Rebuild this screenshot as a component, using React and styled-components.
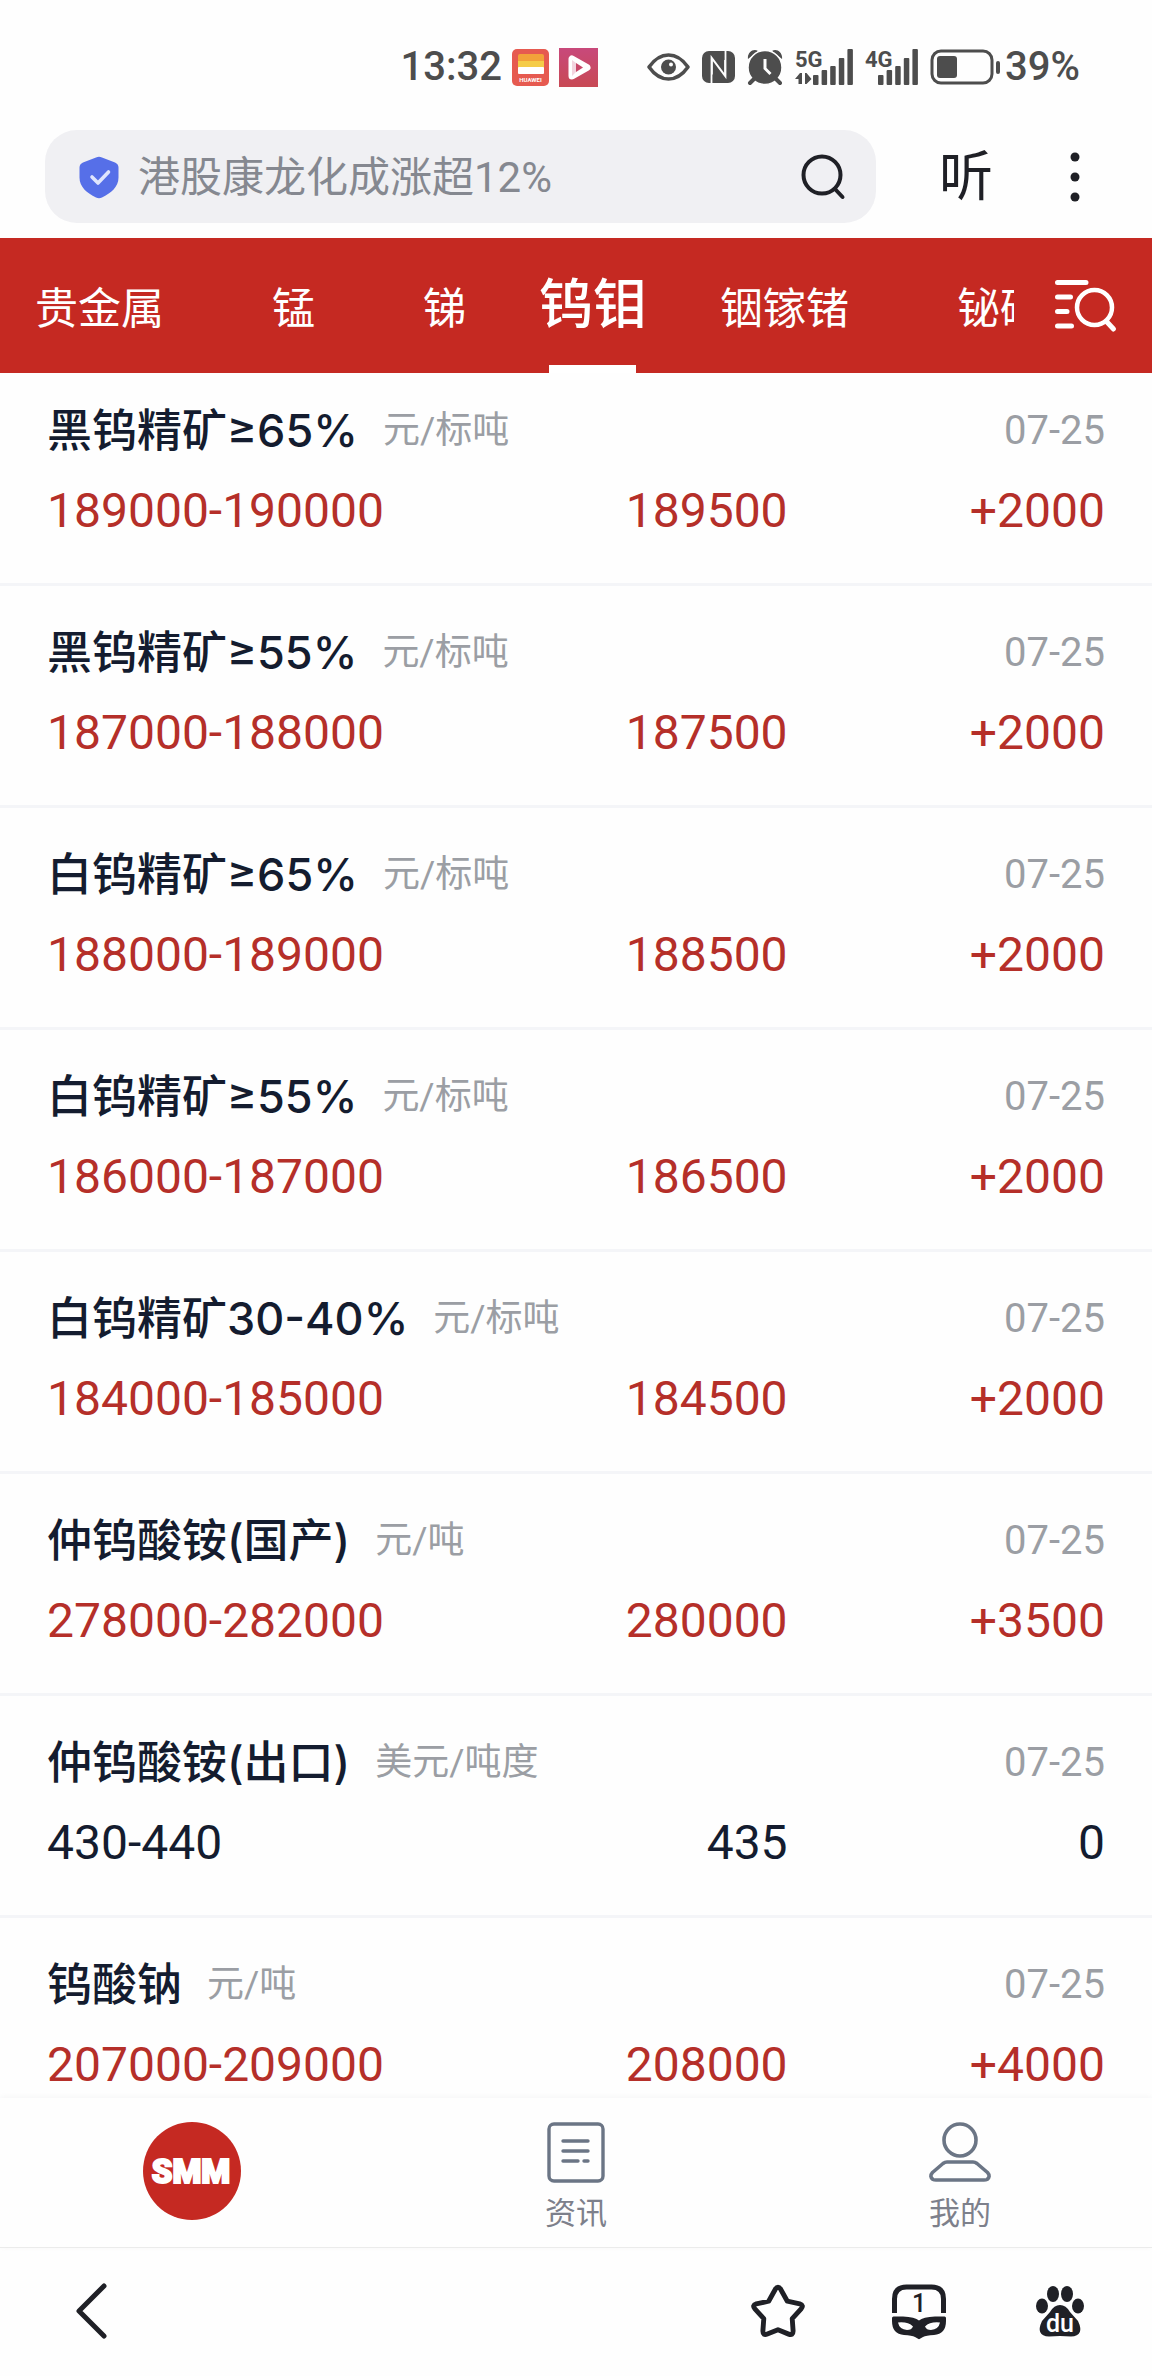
import React, { useState } from "react";
import styled, { createGlobalStyle } from "styled-components";

const GlobalStyle = createGlobalStyle`
  * {
    box-sizing: border-box;
  }
  body {
    margin: 0;
    background-color: #fefefe;
    font-family: Roboto, "Noto Sans CJK SC", sans-serif;
  }
  button {
    margin: 0;
    padding: 0;
    border: none;
    background: none;
    font-family: inherit;
    color: inherit;
    cursor: pointer;
  }
  svg {
    display: block;
    flex: none;
    overflow: visible;
  }
`;

const Screen = styled.div`
  display: flex;
  flex-direction: column;
  height: 100vh;
  overflow: hidden;
`;

const StatusBar = styled.div`
  display: flex;
  align-items: center;
  justify-content: flex-end;
  flex: none;
  height: 130px;
  padding: 4px 72px 0 0;
  color: #4d4d4d;
  font-size: 40px;
  font-weight: 500;
  line-height: 50px;
`;

const StatusGroup = styled.div`
  display: flex;
  align-items: center;
  gap: ${(props) => props.$gap}px;
  margin-right: ${(props) => props.$after || 0}px;
`;

const SignalLabel = styled.text`
  font-family: "Liberation Sans Narrow", Roboto, sans-serif;
  font-size: 22px;
  font-weight: 700;
`;

const SearchRow = styled.header`
  display: flex;
  align-items: center;
  flex: none;
  height: 108px;
  padding: 0 67px 15px 45px;
  color: #1f2026;
`;

const SearchBox = styled.form`
  display: flex;
  align-items: center;
  flex: 1;
  min-width: 0;
  height: 93px;
  padding: 0 30px 0 34px;
  border-radius: 32px;
  background-color: #f0f0f3;
`;

const SearchInput = styled.input`
  flex: 1;
  min-width: 0;
  height: 60px;
  margin-left: 19px;
  padding: 2px 0 0;
  border: none;
  outline: none;
  background: none;
  font-family: inherit;
  font-size: 42px;
  color: #858890;
  &::placeholder {
    color: #858890;
    opacity: 1;
  }
`;

const ListenButton = styled.button`
  margin: 0 72px 0 63px;
  padding-top: 2px;
  font-size: 54px;
  line-height: 60px;
`;

const CategoryBar = styled.nav`
  display: flex;
  flex: none;
  height: 135px;
  color: #fff;
  background-color: #c52922;
`;

const CategoryList = styled.div`
  display: flex;
  flex: 1;
  align-items: baseline;
  min-width: 0;
  overflow: hidden;
`;

const Category = styled.button`
  position: relative;
  flex: none;
  height: 135px;
  padding: ${(props) => (props.$active ? "0 19px" : "0 54px")};
  font-size: ${(props) => (props.$active ? 54 : 43)}px;
  font-weight: ${(props) => (props.$active ? 500 : 400)};
  line-height: 129px;
  white-space: nowrap;
  &:first-child {
    padding-left: 35px;
  }
  &::after {
    content: "";
    display: ${(props) => (props.$active ? "block" : "none")};
    position: absolute;
    bottom: 0;
    left: 50%;
    width: 87px;
    height: 8px;
    margin-left: -44px;
    background-color: #fff;
  }
`;

const CategorySearch = styled.button`
  display: flex;
  align-items: center;
  justify-content: center;
  flex: none;
  width: 138px;
`;

const PriceScroll = styled.main`
  flex: 1;
  min-height: 0;
  overflow: hidden;
`;

/* the list is scrolled a little under the category bar */
const PriceList = styled.ul`
  margin: -9px 0 0;
  padding: 0;
  list-style: none;
`;

const PriceItem = styled.li`
  display: flex;
  flex-direction: column;
  gap: 20px;
  padding: 37px 47px 42px;
  border-bottom: 3px solid #f4f5f8;
`;

const ItemHead = styled.div`
  display: flex;
  align-items: center;
  height: 60px;
  line-height: 60px;
  white-space: nowrap;
`;

const ItemName = styled.span`
  margin-right: 25px;
  font-family: Inter, "Noto Sans CJK SC", sans-serif;
  font-size: 45px;
  font-weight: 500;
  color: #141c2f;
`;

const ItemUnit = styled.span`
  font-size: 37px;
  color: #9b9ea4;
`;

const ItemDate = styled.time`
  margin-left: auto;
  font-size: 40px;
  color: #9b9ea4;
`;

const ItemValues = styled.div`
  display: grid;
  grid-template-columns: 4fr 3fr 3fr;
  height: 60px;
  font-size: 48px;
  line-height: 60px;
  color: ${(props) => (props.$flat ? "#141c2f" : "#b52f29")};
`;

const Value = styled.span`
  text-align: ${(props) => (props.$left ? "left" : "right")};
`;

const TabBar = styled.nav`
  display: grid;
  grid-template-columns: repeat(3, 1fr);
  flex: none;
  height: 150px;
  border-bottom: 1px solid #ebebeb;
  box-shadow: 0 -1px 6px rgba(0, 0, 0, 0.04);
`;

const TabItem = styled.a`
  display: flex;
  flex-direction: column;
  align-items: center;
  gap: 11px;
  padding-top: 24px;
  font-size: 31px;
  line-height: 40px;
  color: #7d808b;
  text-decoration: none;
`;

const BrowserBar = styled.footer`
  display: flex;
  align-items: center;
  flex: none;
  height: 128px;
  padding: 0 58px 2px 60px;
  gap: 73px;
  color: #1f2026;
`;

const BackButton = styled.button`
  margin-right: auto;
`;

const HuaweiIcon = () => (
  <svg width="37" height="37" viewBox="0 0 37 37">
    <rect width="37" height="37" rx="5" fill="#e65a50" />
    <rect x="6" y="5" width="26" height="12" rx="2" fill="#f2a23a" />
    <rect x="6" y="12" width="26" height="10" fill="#f5cc48" />
    <rect x="6" y="18" width="26" height="7" rx="1" fill="#fff" />
    <text
      x="18.5"
      y="33"
      fill="#fff"
      fontSize="6"
      fontWeight="700"
      textAnchor="middle"
    >
      HUAWEI
    </text>
  </svg>
);

const VideoIcon = () => (
  <svg width="39" height="39" viewBox="0 0 39 39">
    <defs>
      <linearGradient id="video" x1="0" y1="0" x2="0" y2="1">
        <stop offset="0" stopColor="#c8497b" />
        <stop offset="1" stopColor="#c84954" />
      </linearGradient>
    </defs>
    <rect width="39" height="39" fill="url(#video)" />
    <path
      d="M13 11v17l15-8.500z"
      fill="#fff"
      stroke="#fff"
      strokeWidth="7"
      strokeLinejoin="round"
    />
    <path d="M17 15v9l7-4.500z" fill="#c8496a" />
    <path d="M13 12l4 3v9l-4 4z" fill="#f3d5df" />
  </svg>
);

const EyeIcon = () => (
  <svg width="43" height="28" viewBox="0 0 43 28">
    <path
      d="M2 14C8 5.500 14 2 21.500 2S35 5.500 41 14C35 22.500 29 26 21.500 26S8 22.500 2 14z"
      fill="none"
      stroke="currentColor"
      strokeWidth="3.600"
      strokeLinejoin="round"
    />
    <circle cx="21.500" cy="14" r="7.500" fill="currentColor" />
    <circle cx="24" cy="11.500" r="2" fill="#fefefe" />
  </svg>
);

const NfcIcon = () => (
  <svg width="33" height="32" viewBox="0 0 33 32">
    <rect width="33" height="32" rx="7" fill="currentColor" />
    <path
      d="M9.500 32V6.500l13.500 18V9M23.500 0v25.500L10 7.500v16"
      fill="none"
      stroke="#fefefe"
      strokeWidth="1.800"
    />
  </svg>
);

const AlarmIcon = () => (
  <svg width="36" height="36" viewBox="0 0 36 36">
    <path d="M1 10C0 4 6-1 11 2zM35 10C36 4 30-1 25 2z" fill="currentColor" />
    <circle
      cx="18"
      cy="18.500"
      r="17"
      fill="currentColor"
      stroke="#fefefe"
      strokeWidth="1.500"
    />
    <path
      d="M7 30l-4 4M29 30l4 4"
      stroke="currentColor"
      strokeWidth="4"
      strokeLinecap="round"
    />
    <path d="M18 10v9.500l5.500 5.500" fill="none" stroke="#fefefe" strokeWidth="3" />
  </svg>
);

const SignalIcon = ({ label, arrows }) => {
  const start = arrows ? 18 : 13;
  return (
    <svg
      width={arrows ? 58 : 53}
      height="36"
      viewBox={`0 0 ${arrows ? 58 : 53} 36`}
      fill="currentColor"
    >
      <SignalLabel x="0" y="18">
        {label}
      </SignalLabel>
      {arrows && <path d="M0 30l5-6h2v11H3.500v-5zM10 24h1.500l5 6-5 5H10z" />}
      {[10, 15, 19, 27, 36].map((h, idx) => (
        <rect
          key={idx}
          x={start + idx * 8.600}
          y={36 - h}
          width="5.500"
          height={h}
          rx="1"
        />
      ))}
    </svg>
  );
};

const BatteryIcon = () => (
  <svg width="72" height="36" viewBox="0 0 72 36">
    <rect
      x="2"
      y="2"
      width="60"
      height="32"
      rx="9"
      fill="none"
      stroke="currentColor"
      strokeWidth="3"
    />
    <rect x="7" y="7" width="20" height="22" rx="3" fill="currentColor" />
    <rect x="66" y="12" width="4" height="13" rx="2" fill="currentColor" />
  </svg>
);

const ShieldIcon = () => (
  <svg width="40" height="44" viewBox="0 0 40 44">
    <path
      d="M17 2.500q3-1.500 6 0l13 5q3.500 1.500 3.500 5v10C39.500 32 32 38 23 42.500q-3 1.500-6 0C8 38 .5 32 .5 22.500v-10q0-3.500 3.500-5z"
      fill="#566fe8"
    />
    <path
      d="M13 22l6 6 10.500-11"
      fill="none"
      stroke="#dfe5fd"
      strokeWidth="3.600"
      strokeLinecap="round"
      strokeLinejoin="round"
    />
  </svg>
);

const SearchIcon = () => (
  <svg width="45" height="45" viewBox="0 0 45 45" fill="none">
    <circle cx="21" cy="21" r="18.500" stroke="currentColor" strokeWidth="4" />
    <path
      d="M34 35l7.500 8"
      stroke="currentColor"
      strokeWidth="4"
      strokeLinecap="round"
    />
  </svg>
);

const DotsIcon = () => (
  <svg width="20" height="50" viewBox="0 0 20 50" fill="currentColor">
    <circle cx="10" cy="5" r="4.500" />
    <circle cx="10" cy="25" r="4.500" />
    <circle cx="10" cy="45" r="4.500" />
  </svg>
);

const ListSearchIcon = () => (
  <svg
    width="66"
    height="54"
    viewBox="0 0 66 54"
    fill="none"
    stroke="#fff"
    strokeWidth="5"
    strokeLinecap="round"
  >
    <path d="M7.500 3.500H36M7.500 18h13M7.500 32.500H17M7.500 47h14" />
    <circle cx="44.500" cy="28.500" r="17.500" strokeWidth="4.500" />
    <path d="M57 43l6.500 7" />
  </svg>
);

const SmmLogo = () => (
  <svg width="98" height="98" viewBox="0 0 98 98">
    <circle cx="49" cy="49" r="49" fill="#c52922" />
    <text
      x="48"
      y="61"
      fill="#fff"
      stroke="#fff"
      strokeWidth="2"
      fontSize="33"
      fontWeight="900"
      textAnchor="middle"
    >
      SMM
    </text>
  </svg>
);

const NewsIcon = () => (
  <svg
    width="58"
    height="61"
    viewBox="0 0 58 61"
    fill="none"
    stroke="#6b7585"
    strokeWidth="3.400"
    strokeLinecap="round"
  >
    <rect x="2" y="2" width="54" height="57" rx="5" />
    <path d="M16 19h25M16 29h25M16 39h15M37 39h4" />
  </svg>
);

const UserIcon = () => (
  <svg
    width="62"
    height="61"
    viewBox="0 0 62 61"
    fill="none"
    stroke="#6b7585"
    strokeWidth="3.600"
    strokeLinejoin="round"
  >
    <circle cx="31" cy="18" r="16" />
    <path d="M18 40h26q2 0 4 1.500l10.500 9q3.500 4-.5 7-1 .500-3 .500H7q-2 0-3-.500-4-3-.5-7l10.500-9q2-1.500 4-1.500z" />
  </svg>
);

const BackIcon = () => (
  <svg width="64" height="64" viewBox="0 0 64 64" fill="none">
    <path
      d="M44 7L19 32l25 25"
      stroke="currentColor"
      strokeWidth="5"
      strokeLinecap="round"
      strokeLinejoin="round"
    />
  </svg>
);

const StarIcon = () => (
  <svg width="68" height="64" viewBox="-4 -3 76 72" fill="none">
    <path
      d="M31 8.500q3-4.500 6 0l7.500 13.500 14 3q5 1.500 1.500 5.500L50 41.500l1 14q0 5.500-5 3.500l-12-5-12 5q-5 2-5-3.500l1-14-10-11q-3.500-4 1.500-5.500l14-3z"
      stroke="currentColor"
      strokeWidth="5.500"
      strokeLinejoin="round"
    />
  </svg>
);

const WindowsIcon = () => (
  <svg width="68" height="64" viewBox="0 0 68 64">
    <path
      d="M9.500 34V20Q9.500 8 21.500 8h25q12 0 12 12v14"
      fill="none"
      stroke="currentColor"
      strokeWidth="5"
    />
    <text
      x="34"
      y="33"
      fill="currentColor"
      fontSize="25"
      fontWeight="500"
      textAnchor="middle"
    >
      1
    </text>
    <path
      fillRule="evenodd"
      fill="currentColor"
      d="M7 39q0-1.500 1.500-1.500h9.500q12 .500 16 4 4-3.500 16-4h9.500Q61 37.500 61 39v3q0 13-12 14-8 .500-11 2l-3.500 2q-.5.300-1 0L30 58q-3-1.500-11-2Q7 55 7 42zM13 43.500q1.500 7 9 7.500 4.500 0 6-3.500-5-5-15-4zM55 43.500q-10-1-15 4 1.500 3.500 6 3.500 7.500-.5 9-7.500z"
    />
  </svg>
);

const PawIcon = () => (
  <svg width="68" height="64" viewBox="0 0 68 64" fill="currentColor">
    <ellipse cx="27" cy="15" rx="6" ry="8" />
    <ellipse cx="41" cy="15" rx="6" ry="8" />
    <ellipse cx="16" cy="27" rx="6" ry="7.500" />
    <ellipse cx="52" cy="27" rx="6" ry="7.500" />
    <path d="M34 26q6 0 10 7l8 9q7 15-7 15.500-11-1-22 0-14-.5-7-15.500l8-9q4-7 10-7z" />
    <text
      x="34"
      y="53"
      fill="#fff"
      fontSize="25"
      fontWeight="500"
      textAnchor="middle"
    >
      du
    </text>
  </svg>
);

const categories = ["贵金属", "锰", "锑", "钨钼", "铟镓锗", "铋硒碲"];

const prices = [
  { name: "黑钨精矿≥65%", unit: "元/标吨", range: "189000-190000", avg: "189500", change: "+2000" },
  { name: "黑钨精矿≥55%", unit: "元/标吨", range: "187000-188000", avg: "187500", change: "+2000" },
  { name: "白钨精矿≥65%", unit: "元/标吨", range: "188000-189000", avg: "188500", change: "+2000" },
  { name: "白钨精矿≥55%", unit: "元/标吨", range: "186000-187000", avg: "186500", change: "+2000" },
  { name: "白钨精矿30-40%", unit: "元/标吨", range: "184000-185000", avg: "184500", change: "+2000" },
  { name: "仲钨酸铵(国产)", unit: "元/吨", range: "278000-282000", avg: "280000", change: "+3500" },
  { name: "仲钨酸铵(出口)", unit: "美元/吨度", range: "430-440", avg: "435", change: "0" },
  { name: "钨酸钠", unit: "元/吨", range: "207000-209000", avg: "208000", change: "+4000" },
];

const App = () => {
  const [active, setActive] = useState("钨钼");

  return (
    <>
      <GlobalStyle />
      <Screen>
        <StatusBar>
          <StatusGroup $gap={10} $after={49}>
            <span>13:32</span>
            <HuaweiIcon />
            <VideoIcon />
          </StatusGroup>
          <StatusGroup $gap={12} $after={12}>
            <EyeIcon />
            <NfcIcon />
            <AlarmIcon />
            <SignalIcon label="5G" arrows />
            <SignalIcon label="4G" />
          </StatusGroup>
          <StatusGroup $gap={3}>
            <BatteryIcon />
            <span>39%</span>
          </StatusGroup>
        </StatusBar>

        <SearchRow>
          <SearchBox onSubmit={(e) => e.preventDefault()}>
            <ShieldIcon />
            <SearchInput aria-label="搜索" placeholder="港股康龙化成涨超12%" />
            <button aria-label="搜索">
              <SearchIcon />
            </button>
          </SearchBox>
          <ListenButton>听</ListenButton>
          <button aria-label="更多">
            <DotsIcon />
          </button>
        </SearchRow>

        <CategoryBar>
          <CategoryList>
            {categories.map((el) => (
              <Category
                key={el}
                $active={el === active}
                onClick={() => setActive(el)}
              >
                {el}
              </Category>
            ))}
          </CategoryList>
          <CategorySearch aria-label="筛选">
            <ListSearchIcon />
          </CategorySearch>
        </CategoryBar>

        <PriceScroll>
          <PriceList>
            {prices.map((el) => (
              <PriceItem key={el.name}>
                <ItemHead>
                  <ItemName>{el.name}</ItemName>
                  <ItemUnit>{el.unit}</ItemUnit>
                  <ItemDate>07-25</ItemDate>
                </ItemHead>
                <ItemValues $flat={el.change === "0"}>
                  <Value $left>{el.range}</Value>
                  <Value>{el.avg}</Value>
                  <Value>{el.change}</Value>
                </ItemValues>
              </PriceItem>
            ))}
          </PriceList>
        </PriceScroll>

        <TabBar>
          <TabItem href="#home">
            <SmmLogo />
          </TabItem>
          <TabItem href="#news">
            <NewsIcon />
            资讯
          </TabItem>
          <TabItem href="#mine">
            <UserIcon />
            我的
          </TabItem>
        </TabBar>

        <BrowserBar>
          <BackButton aria-label="返回">
            <BackIcon />
          </BackButton>
          <button aria-label="收藏">
            <StarIcon />
          </button>
          <button aria-label="窗口">
            <WindowsIcon />
          </button>
          <button aria-label="百度">
            <PawIcon />
          </button>
        </BrowserBar>
      </Screen>
    </>
  );
};

export default App;
